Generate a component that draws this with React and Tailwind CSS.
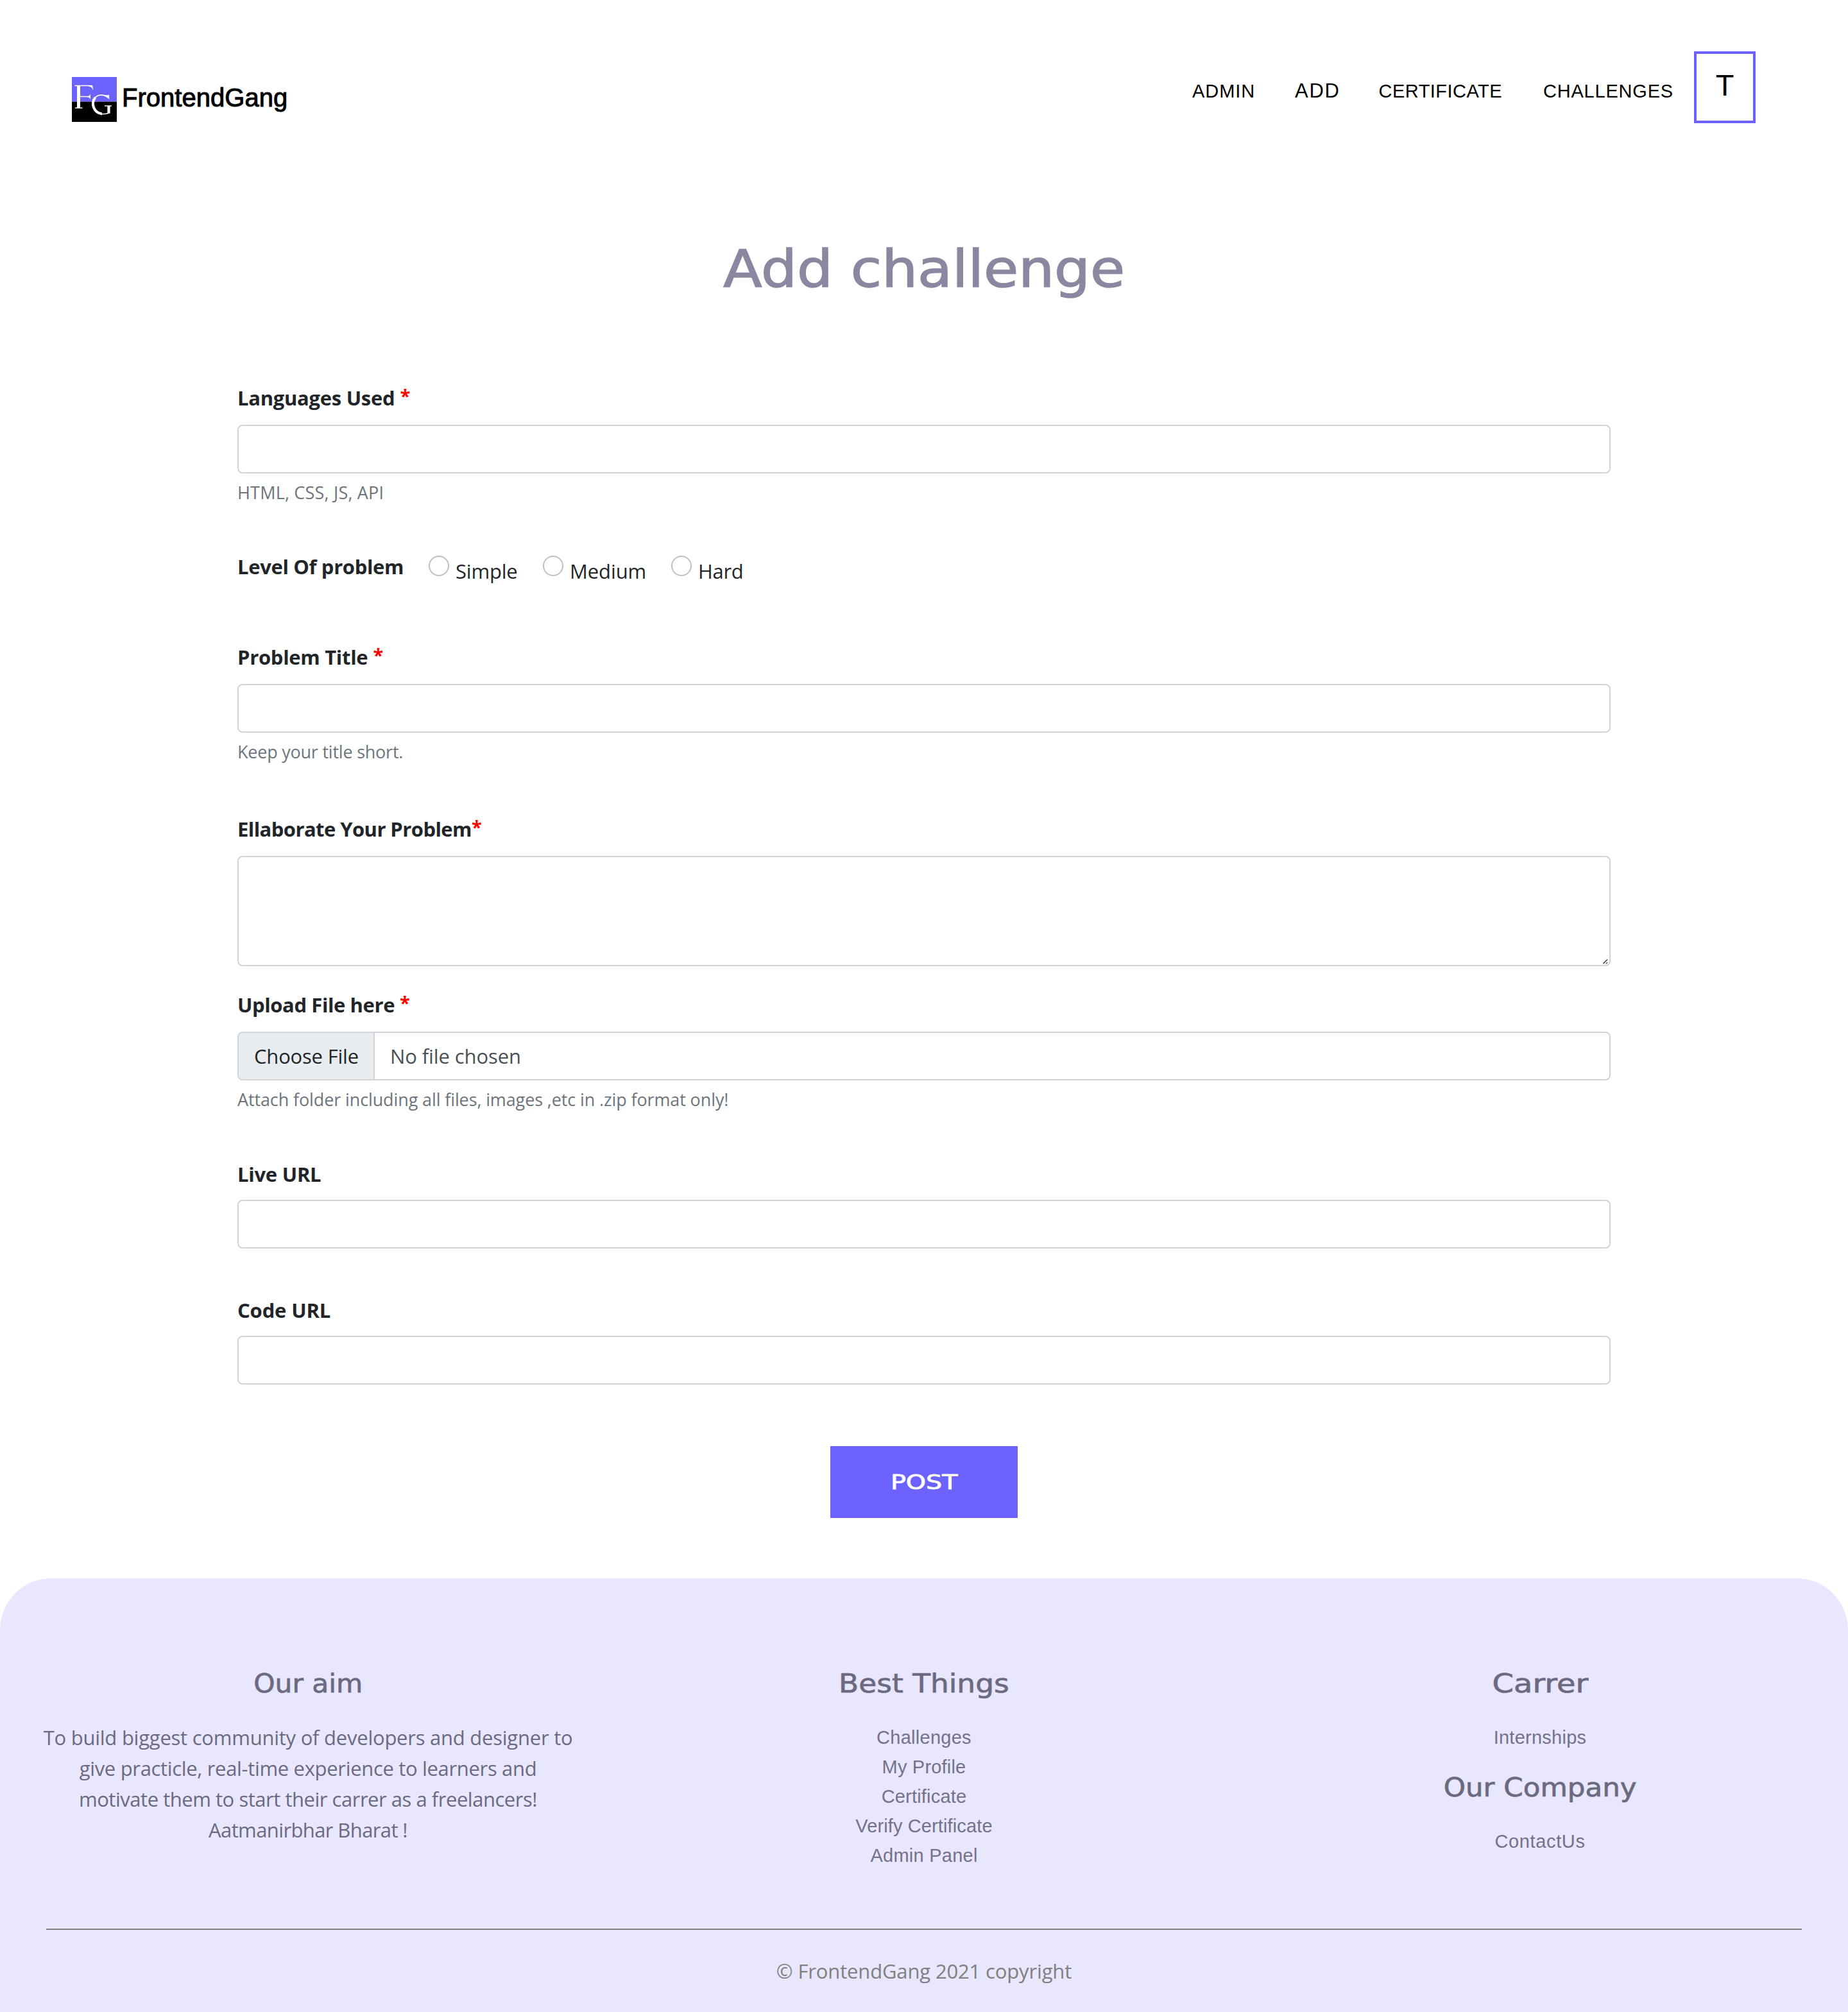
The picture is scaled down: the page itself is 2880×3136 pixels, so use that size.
const arc = "font-['Liberation_Sans',Arial,sans-serif]";
const ui = "font-['Open_Sans',sans-serif]";
const wide = "font-['DejaVu_Sans',sans-serif]";

function Label({ text, spacing, star, starClass = "ml-2" }) {
  return (
    <label className="flex h-12 leading-[48px] text-[31px] font-bold">
      <span className={spacing}>{text}</span>
      {star && <span className={`${starClass} w-[14px] -mt-[3px] text-[29px] font-bold text-[#ff0000]`}>*</span>}
    </label>
  );
}

function TextInput() {
  return <input type="text" className="block h-[76px] w-full rounded-lg border-2 border-[#ced4da] bg-white px-6 outline-none" />;
}

function Hint({ text, spacing }) {
  return <p className={`mt-2 h-[42px] text-[27px] leading-[43px] text-[#6c757d] ${spacing}`}>{text}</p>;
}

function Radio({ text, className }) {
  return (
    <div className="flex items-start">
      <span className="mt-[7px] size-8 shrink-0 rounded-full border-2 border-black/25 bg-white" />
      <span className={`mt-[7px] ml-[10px] leading-[48px] whitespace-nowrap ${className}`}>{text}</span>
    </div>
  );
}

function FooterHeading({ text, className }) {
  return (
    <h3 className={`h-12 text-[40px] leading-[48px] whitespace-nowrap [-webkit-text-stroke:0.7px_#6b6a80] ${wide}`}>
      <span className={`inline-block ${className}`}>{text}</span>
    </h3>
  );
}

function FooterLink({ text, className }) {
  return (
    <a className={`block h-[46px] text-[29px] leading-[46px] whitespace-nowrap text-[#737289] ${arc} ${className}`}>{text}</a>
  );
}

function Logo() {
  return (
    <div className="mt-[40px] flex h-[70px] items-start">
      <svg width="70" height="70" viewBox="0 0 70 70">
        <rect width="70" height="38.5" fill="#6c63ff" />
        <rect y="38.5" width="70" height="31.5" fill="#000" />
        <g fill="none" stroke="#fff">
          <path d="M10.5 13.5V48" strokeWidth="5" />
          <path d="M4.500 13.500H31M5 48.300H16.500M13 30.500H27" strokeWidth="1.500" />
          <path d="M57 33C50 26 40 27 35.500 33" strokeWidth="1.600" />
          <path d="M36.500 32C29 41 34 56 47 57.500" strokeWidth="4" />
          <path d="M46 57.700C51 58 55 57.500 59 55.500" strokeWidth="1.600" />
          <path d="M57.500 45V56.500" strokeWidth="4.200" />
          <path d="M51 45H62" strokeWidth="1.400" />
        </g>
        <path d="M24 13h8l1.500 8C31.500 16.500 29 14.500 24 14z" fill="#fff" />
        <path d="M22 31c4-.5 6-2 7-4.500v8.500c-1-2.500-3-4-7-4z" fill="#fff" />
        <path d="M50 28c4 0 6 1 8-.5l.5 8C56.500 31.500 54 29.500 50 28z" fill="#fff" />
      </svg>
      <span className={`ml-[8px] mt-[9px] text-[40px] leading-[46px] tracking-[0.02px] text-black [-webkit-text-stroke:1px_#000] ${arc}`}>
        FrontendGang
      </span>
    </div>
  );
}

export default function App() {
  return (
    <div className={`flex h-[3136px] w-[2880px] flex-col overflow-hidden bg-white text-[31px] text-[#212529] ${ui}`}>
      <header className="flex h-[372px] shrink-0 items-start justify-between pt-20 pr-36 pl-28">
        <Logo />
        <nav className={`flex items-start text-[29px] leading-[46px] text-black ${arc}`}>
          <a className="mt-[39px] mr-[62px] tracking-[0.9px]">ADMIN</a>
          <a className="mt-[39px] mr-[60px] text-[31px] tracking-[1.7px]">ADD</a>
          <a className="mt-[39px] mr-[64px] tracking-[0.45px]">CERTIFICATE</a>
          <a className="mt-[39px] mr-[32px] tracking-[0.8px]">CHALLENGES</a>
          <div className="h-28 w-24 border-4 border-[#6c63ff] text-center text-[47px]">
            <span className="mt-[26px] block leading-[46px]">T</span>
          </div>
        </nav>
      </header>

      <h1 className={`h-24 shrink-0 text-center text-[80px] leading-[96px] text-[#8988a0] [-webkit-text-stroke:1.5px_#8988a0] ${wide}`}>
        <span className="inline-block scale-x-[1.101]">Add challenge</span>
      </h1>

      <form className="mx-auto mt-32 flex w-[2140px] shrink-0 flex-col">
        <Label text="Languages Used" spacing="tracking-[-0.28px]" star />
        <div className="mt-[18px]"><TextInput /></div>
        <Hint text="HTML, CSS, JS, API" spacing="tracking-[0.2px]" />

        <div className="mt-[71px] flex h-12 items-start">
          <span className="w-[298px] leading-[49px] font-bold tracking-[-0.35px]">Level Of problem</span>
          <div className="w-[178px]"><Radio text="Simple" className="tracking-[-0.2px]" /></div>
          <div className="w-[200px]"><Radio text="Medium" className="tracking-[-0.1px]" /></div>
          <Radio text="Hard" className="tracking-[-0.3px]" />
        </div>

        <div className="mt-[93px]"><Label text="Problem Title" spacing="tracking-[-0.3px]" star /></div>
        <div className="mt-[18px]"><TextInput /></div>
        <Hint text="Keep your title short." spacing="tracking-[-0.23px]" />

        <div className="mt-[76px]"><Label text="Ellaborate Your Problem" spacing="tracking-[-0.57px]" star starClass="ml-0" /></div>
        <div className="relative mt-[18px]">
          <textarea className="block h-[172px] w-full resize-none rounded-lg border-2 border-[#ced4da] bg-white outline-none" />
          <svg className="absolute right-[4px] bottom-[3px]" width="8" height="8" viewBox="0 0 8 8" fill="none" stroke="#4a4a4a" strokeWidth="1.6">
            <path d="M0.500 7L7 0.500M5 7L7 5" />
          </svg>
        </div>

        <div className="mt-9"><Label text="Upload File here" spacing="tracking-[-0.4px]" star /></div>
        <div className="mt-[18px] flex h-[76px] overflow-hidden rounded-lg border-2 border-[#ced4da] leading-[48px]">
          <span className="w-[212px] border-r-2 border-[#ced4da] bg-[#e9ecef] pt-3 pl-6 tracking-[-0.2px]">Choose File</span>
          <span className="pt-3 pl-6 tracking-[-0.1px] text-[#495057]">No file chosen</span>
        </div>
        <Hint text="Attach folder including all files, images ,etc in .zip format only!" spacing="tracking-[-0.12px]" />

        <div className="mt-[72px]"><Label text="Live URL" spacing="tracking-[-0.25px]" /></div>
        <div className="mt-4"><TextInput /></div>

        <div className="mt-[72px]"><Label text="Code URL" spacing="tracking-[-0.15px]" /></div>
        <div className="mt-4"><TextInput /></div>

        <button type="button" className={`mt-24 h-28 w-[292px] self-center bg-[#6c63ff] text-[32px] leading-[48px] text-white [-webkit-text-stroke:0.8px_#fff] ${wide}`}>
          <span className="inline-block scale-x-[1.24]">POST</span>
        </button>
      </form>

      <footer className="mt-[94px] flex grow flex-col rounded-t-[80px] bg-[#e9e7fe] text-center text-[#6b6a80]">
        <div className="grid h-[546px] grid-cols-3 pt-[140px]">
          <section>
            <FooterHeading text="Our aim" className="scale-x-[1.06]" />
            <p className="mt-9 leading-[48px] whitespace-nowrap">
              <span className="block tracking-[-0.24px]">To build biggest community of developers and designer to</span>
              <span className="block tracking-[-0.33px]">give practicle, real-time experience to learners and</span>
              <span className="block tracking-[-0.47px]">motivate them to start their carrer as a freelancers!</span>
              <span className="block tracking-[-0.61px]">Aatmanirbhar Bharat !</span>
            </p>
          </section>
          <section>
            <FooterHeading text="Best Things" className="scale-x-[1.136]" />
            <div className="mt-[37px]">
              <FooterLink text="Challenges" className="tracking-[0.27px]" />
              <FooterLink text="My Profile" className="tracking-[0.2px]" />
              <FooterLink text="Certificate" className="tracking-[0.2px]" />
              <FooterLink text="Verify Certificate" className="tracking-[0.12px]" />
              <FooterLink text="Admin Panel" className="tracking-[0.25px]" />
            </div>
          </section>
          <section>
            <FooterHeading text="Carrer" className="scale-x-[1.2]" />
            <div className="mt-[37px]">
              <FooterLink text="Internships" className="tracking-[0.26px]" />
            </div>
            <div className="mt-[31px]">
              <FooterHeading text="Our Company" className="scale-x-[1.089]" />
            </div>
            <div className="mt-[37px]">
              <FooterLink text="ContactUs" className="tracking-[0.64px]" />
            </div>
          </section>
        </div>
        <hr className="mx-[72px] h-0.5 border-0 bg-[#808080]" />
        <p className="mt-10 leading-[48px] tracking-[-0.15px] text-[#808080]">© FrontendGang 2021 copyright</p>
      </footer>
    </div>
  );
}
